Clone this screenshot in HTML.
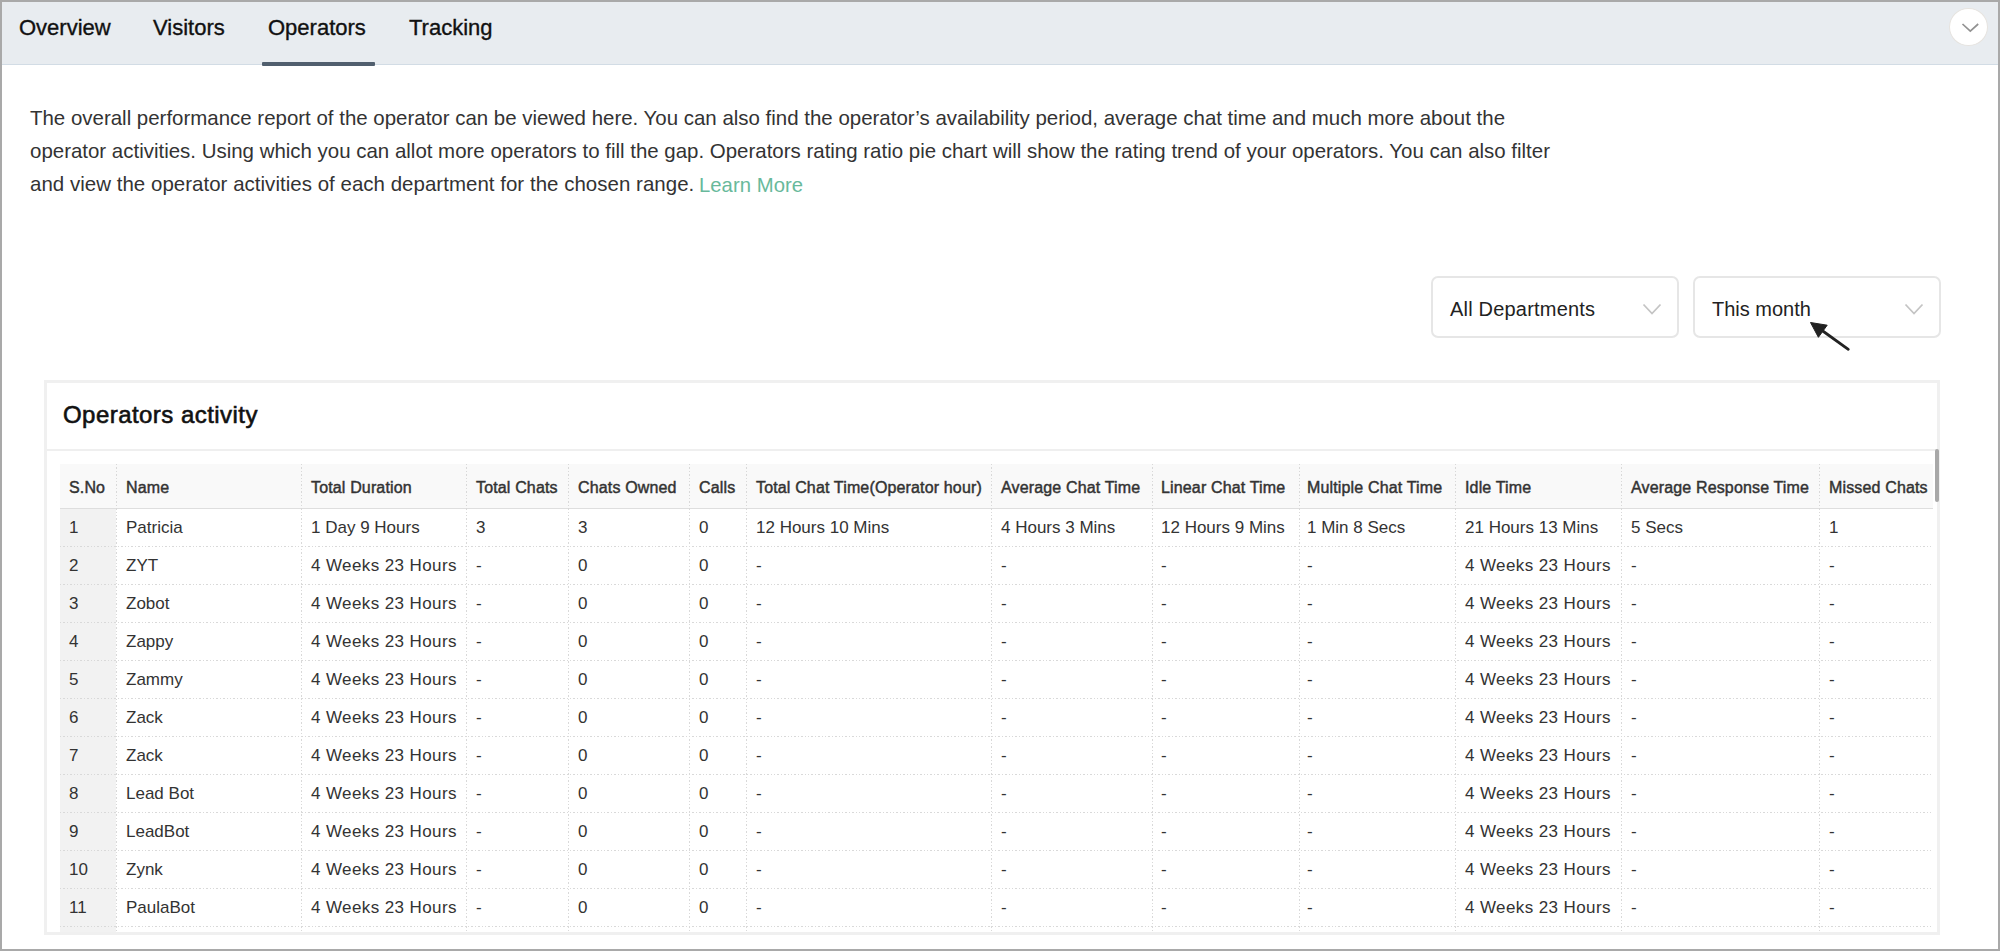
<!DOCTYPE html><html><head><meta charset="utf-8"><style>
*{margin:0;padding:0;box-sizing:border-box}
html,body{width:2000px;height:951px;overflow:hidden;background:#fff}
body{position:relative;font-family:"Liberation Sans",sans-serif;color:#333}
.a{position:absolute;white-space:nowrap}
.frame{position:absolute;left:0;top:0;width:2000px;height:951px;border:2px solid #a9a9a9;border-bottom-width:2px}
.tabbar{position:absolute;left:2px;top:2px;width:1996px;height:63px;background:#e8ecf0;border-bottom:1px solid #d2dce5}
.tab{position:absolute;top:0;font-size:22px;line-height:22px;color:#111;-webkit-text-stroke:0.35px #111}
.uline{position:absolute;left:262px;top:62px;width:113px;height:4px;background:#515f6e;border-radius:1px}
.circ{position:absolute;left:1949px;top:7.5px;width:39px;height:38.5px;border-radius:50%;background:#fff;border:1px solid #e6e3df}
.para{position:absolute;left:30px;font-size:20.47px;line-height:20px;color:#333}
.learn{color:#68b99b;font-size:20.3px;position:relative;top:1.3px;margin-left:-1px}
.dd{position:absolute;top:276px;width:248px;height:62px;border:2px solid #e6e6e6;border-radius:7px;background:#fff}
.ddt{position:absolute;font-size:20px;line-height:20px;color:#222}
.card{position:absolute;left:44px;top:380px;width:1896px;height:555px;border:3px solid #f0f0f0;background:#fff}
.ctitle{position:absolute;left:63px;font-size:24px;line-height:24px;font-weight:400;letter-spacing:0.45px;color:#111;-webkit-text-stroke:0.6px #111}
.csep{position:absolute;left:47px;top:448.5px;width:1890px;height:2px;background:#efefef}
.clip{position:absolute;left:47px;top:451px;width:1890px;height:481px;overflow:hidden}
.hbg{position:absolute;left:13px;top:13px;height:44px;background:#f9f9f9}
.hline{position:absolute;left:13px;top:56.6px;height:1.6px;background:#dedede}
.sno{position:absolute;left:13px;width:56px;background:#f2f2f2}
.vl{position:absolute;width:1px;background:repeating-linear-gradient(to bottom,#d9d9d9 0 1.4px,transparent 1.4px 3.4px)}
.hl{position:absolute;height:1px;background:repeating-linear-gradient(to right,#d9d9d9 0 1.4px,transparent 1.4px 3.4px)}
.th{position:absolute;font-size:16px;line-height:16px;font-weight:400;color:#333;-webkit-text-stroke:0.45px #333;letter-spacing:0.15px}
.td{position:absolute;font-size:17px;line-height:17px;color:#333}
.wk{letter-spacing:0.4px}
.sb{position:absolute;left:1934.6px;top:449px;width:4.8px;height:53px;background:#a8a8a8;border-radius:2px}
</style></head><body><div class="tabbar"></div>
<div class="a tab" style="left:19px;top:17.4px">Overview</div>
<div class="a tab" style="left:153px;top:17.4px">Visitors</div>
<div class="a tab" style="left:268px;top:17.4px">Operators</div>
<div class="a tab" style="left:409px;top:17.4px">Tracking</div>
<div class="uline"></div>
<div class="circ"></div>
<svg class="a" style="left:1960px;top:20px" width="22" height="14" viewBox="0 0 22 14"><path d="M2.5 4 L10.3 11.2 L18.2 4" fill="none" stroke="#929292" stroke-width="1.7"/></svg>
<div class="a para" style="top:108.3px;letter-spacing:0px">The overall performance report of the operator can be viewed here. You can also find the operator’s availability period, average chat time and much more about the</div>
<div class="a para" style="top:141.2px;letter-spacing:0px">operator activities. Using which you can allot more operators to fill the gap. Operators rating ratio pie chart will show the rating trend of your operators. You can also filter</div>
<div class="a para" style="top:173.9px;letter-spacing:0.035px">and view the operator activities of each department for the chosen range. <span class="learn">Learn More</span></div>
<div class="dd" style="left:1431px"></div>
<div class="a ddt" style="left:1450px;top:299.3px;letter-spacing:0.2px">All Departments</div>
<svg class="a" style="left:1641px;top:302px" width="22" height="15" viewBox="0 0 22 15"><path d="M2.5 2.5 L11 11.5 L19.5 2.5" fill="none" stroke="#c4c4c4" stroke-width="1.8"/></svg>
<div class="dd" style="left:1693px"></div>
<div class="a ddt" style="left:1712px;top:299.3px">This month</div>
<svg class="a" style="left:1903px;top:302px" width="22" height="15" viewBox="0 0 22 15"><path d="M2.5 2.5 L11 11.5 L19.5 2.5" fill="none" stroke="#c4c4c4" stroke-width="1.8"/></svg>
<svg class="a" style="left:1800px;top:315px" width="60" height="45" viewBox="0 0 60 45"><path d="M10.5 7.5 L27.2 10.2 L18.4 22.3 Z" fill="#222" stroke="#222" stroke-width="1" stroke-linejoin="round"/><path d="M20 14 L48.3 34.3" stroke="#222" stroke-width="2.8" stroke-linecap="round"/></svg>
<div class="card"></div>
<div class="a ctitle" style="top:403px">Operators activity</div>
<div class="csep"></div>
<div class="clip"><div class="hbg" style="width:1873px"></div><div class="sno" style="top:58px;height:423px"></div><div class="hline" style="width:1873px"></div><div class="vl" style="left:69px;top:13px;height:468px"></div><div class="vl" style="left:254px;top:13px;height:468px"></div><div class="vl" style="left:419px;top:13px;height:468px"></div><div class="vl" style="left:521px;top:13px;height:468px"></div><div class="vl" style="left:642px;top:13px;height:468px"></div><div class="vl" style="left:699px;top:13px;height:468px"></div><div class="vl" style="left:944px;top:13px;height:468px"></div><div class="vl" style="left:1105px;top:13px;height:468px"></div><div class="vl" style="left:1252px;top:13px;height:468px"></div><div class="vl" style="left:1408px;top:13px;height:468px"></div><div class="vl" style="left:1574px;top:13px;height:468px"></div><div class="vl" style="left:1772px;top:13px;height:468px"></div><div class="hl" style="left:13px;top:95px;width:1873px"></div><div class="hl" style="left:13px;top:133px;width:1873px"></div><div class="hl" style="left:13px;top:171px;width:1873px"></div><div class="hl" style="left:13px;top:209px;width:1873px"></div><div class="hl" style="left:13px;top:247px;width:1873px"></div><div class="hl" style="left:13px;top:285px;width:1873px"></div><div class="hl" style="left:13px;top:323px;width:1873px"></div><div class="hl" style="left:13px;top:361px;width:1873px"></div><div class="hl" style="left:13px;top:399px;width:1873px"></div><div class="hl" style="left:13px;top:437px;width:1873px"></div><div class="hl" style="left:13px;top:475px;width:1873px"></div><div class="a th" style="left:22px;top:28.5px">S.No</div><div class="a th" style="left:79px;top:28.5px">Name</div><div class="a th" style="left:264px;top:28.5px">Total Duration</div><div class="a th" style="left:429px;top:28.5px">Total Chats</div><div class="a th" style="left:531px;top:28.5px">Chats Owned</div><div class="a th" style="left:652px;top:28.5px">Calls</div><div class="a th" style="left:709px;top:28.5px">Total Chat Time(Operator hour)</div><div class="a th" style="left:954px;top:28.5px">Average Chat Time</div><div class="a th" style="left:1114px;top:28.5px">Linear Chat Time</div><div class="a th" style="left:1260px;top:28.5px">Multiple Chat Time</div><div class="a th" style="left:1418px;top:28.5px">Idle Time</div><div class="a th" style="left:1584px;top:28.5px">Average Response Time</div><div class="a th" style="left:1782px;top:28.5px">Missed Chats</div><div class="a td" style="left:22px;top:58px;margin-top:9.6px;transform:translateY(0px)">1</div><div class="a td" style="left:79px;top:58px;margin-top:9.6px;transform:translateY(0px)">Patricia</div><div class="a td" style="left:264px;top:58px;margin-top:9.6px;transform:translateY(0px)">1 Day 9 Hours</div><div class="a td" style="left:429px;top:58px;margin-top:9.6px;transform:translateY(0px)">3</div><div class="a td" style="left:531px;top:58px;margin-top:9.6px;transform:translateY(0px)">3</div><div class="a td" style="left:652px;top:58px;margin-top:9.6px;transform:translateY(0px)">0</div><div class="a td" style="left:709px;top:58px;margin-top:9.6px;transform:translateY(0px)">12 Hours 10 Mins</div><div class="a td" style="left:954px;top:58px;margin-top:9.6px;transform:translateY(0px)">4 Hours 3 Mins</div><div class="a td" style="left:1114px;top:58px;margin-top:9.6px;transform:translateY(0px)">12 Hours 9 Mins</div><div class="a td" style="left:1260px;top:58px;margin-top:9.6px;transform:translateY(0px)">1 Min 8 Secs</div><div class="a td" style="left:1418px;top:58px;margin-top:9.6px;transform:translateY(0px)">21 Hours 13 Mins</div><div class="a td" style="left:1584px;top:58px;margin-top:9.6px;transform:translateY(0px)">5 Secs</div><div class="a td" style="left:1782px;top:58px;margin-top:9.6px;transform:translateY(0px)">1</div><div class="a td" style="left:22px;top:58px;margin-top:9.6px;transform:translateY(38px)">2</div><div class="a td" style="left:79px;top:58px;margin-top:9.6px;transform:translateY(38px)">ZYT</div><div class="a td wk" style="left:264px;top:58px;margin-top:9.6px;transform:translateY(38px)">4 Weeks 23 Hours</div><div class="a td" style="left:429px;top:58px;margin-top:9.6px;transform:translateY(38px)">-</div><div class="a td" style="left:531px;top:58px;margin-top:9.6px;transform:translateY(38px)">0</div><div class="a td" style="left:652px;top:58px;margin-top:9.6px;transform:translateY(38px)">0</div><div class="a td" style="left:709px;top:58px;margin-top:9.6px;transform:translateY(38px)">-</div><div class="a td" style="left:954px;top:58px;margin-top:9.6px;transform:translateY(38px)">-</div><div class="a td" style="left:1114px;top:58px;margin-top:9.6px;transform:translateY(38px)">-</div><div class="a td" style="left:1260px;top:58px;margin-top:9.6px;transform:translateY(38px)">-</div><div class="a td wk" style="left:1418px;top:58px;margin-top:9.6px;transform:translateY(38px)">4 Weeks 23 Hours</div><div class="a td" style="left:1584px;top:58px;margin-top:9.6px;transform:translateY(38px)">-</div><div class="a td" style="left:1782px;top:58px;margin-top:9.6px;transform:translateY(38px)">-</div><div class="a td" style="left:22px;top:58px;margin-top:9.6px;transform:translateY(76px)">3</div><div class="a td" style="left:79px;top:58px;margin-top:9.6px;transform:translateY(76px)">Zobot</div><div class="a td wk" style="left:264px;top:58px;margin-top:9.6px;transform:translateY(76px)">4 Weeks 23 Hours</div><div class="a td" style="left:429px;top:58px;margin-top:9.6px;transform:translateY(76px)">-</div><div class="a td" style="left:531px;top:58px;margin-top:9.6px;transform:translateY(76px)">0</div><div class="a td" style="left:652px;top:58px;margin-top:9.6px;transform:translateY(76px)">0</div><div class="a td" style="left:709px;top:58px;margin-top:9.6px;transform:translateY(76px)">-</div><div class="a td" style="left:954px;top:58px;margin-top:9.6px;transform:translateY(76px)">-</div><div class="a td" style="left:1114px;top:58px;margin-top:9.6px;transform:translateY(76px)">-</div><div class="a td" style="left:1260px;top:58px;margin-top:9.6px;transform:translateY(76px)">-</div><div class="a td wk" style="left:1418px;top:58px;margin-top:9.6px;transform:translateY(76px)">4 Weeks 23 Hours</div><div class="a td" style="left:1584px;top:58px;margin-top:9.6px;transform:translateY(76px)">-</div><div class="a td" style="left:1782px;top:58px;margin-top:9.6px;transform:translateY(76px)">-</div><div class="a td" style="left:22px;top:58px;margin-top:9.6px;transform:translateY(114px)">4</div><div class="a td" style="left:79px;top:58px;margin-top:9.6px;transform:translateY(114px)">Zappy</div><div class="a td wk" style="left:264px;top:58px;margin-top:9.6px;transform:translateY(114px)">4 Weeks 23 Hours</div><div class="a td" style="left:429px;top:58px;margin-top:9.6px;transform:translateY(114px)">-</div><div class="a td" style="left:531px;top:58px;margin-top:9.6px;transform:translateY(114px)">0</div><div class="a td" style="left:652px;top:58px;margin-top:9.6px;transform:translateY(114px)">0</div><div class="a td" style="left:709px;top:58px;margin-top:9.6px;transform:translateY(114px)">-</div><div class="a td" style="left:954px;top:58px;margin-top:9.6px;transform:translateY(114px)">-</div><div class="a td" style="left:1114px;top:58px;margin-top:9.6px;transform:translateY(114px)">-</div><div class="a td" style="left:1260px;top:58px;margin-top:9.6px;transform:translateY(114px)">-</div><div class="a td wk" style="left:1418px;top:58px;margin-top:9.6px;transform:translateY(114px)">4 Weeks 23 Hours</div><div class="a td" style="left:1584px;top:58px;margin-top:9.6px;transform:translateY(114px)">-</div><div class="a td" style="left:1782px;top:58px;margin-top:9.6px;transform:translateY(114px)">-</div><div class="a td" style="left:22px;top:58px;margin-top:9.6px;transform:translateY(152px)">5</div><div class="a td" style="left:79px;top:58px;margin-top:9.6px;transform:translateY(152px)">Zammy</div><div class="a td wk" style="left:264px;top:58px;margin-top:9.6px;transform:translateY(152px)">4 Weeks 23 Hours</div><div class="a td" style="left:429px;top:58px;margin-top:9.6px;transform:translateY(152px)">-</div><div class="a td" style="left:531px;top:58px;margin-top:9.6px;transform:translateY(152px)">0</div><div class="a td" style="left:652px;top:58px;margin-top:9.6px;transform:translateY(152px)">0</div><div class="a td" style="left:709px;top:58px;margin-top:9.6px;transform:translateY(152px)">-</div><div class="a td" style="left:954px;top:58px;margin-top:9.6px;transform:translateY(152px)">-</div><div class="a td" style="left:1114px;top:58px;margin-top:9.6px;transform:translateY(152px)">-</div><div class="a td" style="left:1260px;top:58px;margin-top:9.6px;transform:translateY(152px)">-</div><div class="a td wk" style="left:1418px;top:58px;margin-top:9.6px;transform:translateY(152px)">4 Weeks 23 Hours</div><div class="a td" style="left:1584px;top:58px;margin-top:9.6px;transform:translateY(152px)">-</div><div class="a td" style="left:1782px;top:58px;margin-top:9.6px;transform:translateY(152px)">-</div><div class="a td" style="left:22px;top:58px;margin-top:9.6px;transform:translateY(190px)">6</div><div class="a td" style="left:79px;top:58px;margin-top:9.6px;transform:translateY(190px)">Zack</div><div class="a td wk" style="left:264px;top:58px;margin-top:9.6px;transform:translateY(190px)">4 Weeks 23 Hours</div><div class="a td" style="left:429px;top:58px;margin-top:9.6px;transform:translateY(190px)">-</div><div class="a td" style="left:531px;top:58px;margin-top:9.6px;transform:translateY(190px)">0</div><div class="a td" style="left:652px;top:58px;margin-top:9.6px;transform:translateY(190px)">0</div><div class="a td" style="left:709px;top:58px;margin-top:9.6px;transform:translateY(190px)">-</div><div class="a td" style="left:954px;top:58px;margin-top:9.6px;transform:translateY(190px)">-</div><div class="a td" style="left:1114px;top:58px;margin-top:9.6px;transform:translateY(190px)">-</div><div class="a td" style="left:1260px;top:58px;margin-top:9.6px;transform:translateY(190px)">-</div><div class="a td wk" style="left:1418px;top:58px;margin-top:9.6px;transform:translateY(190px)">4 Weeks 23 Hours</div><div class="a td" style="left:1584px;top:58px;margin-top:9.6px;transform:translateY(190px)">-</div><div class="a td" style="left:1782px;top:58px;margin-top:9.6px;transform:translateY(190px)">-</div><div class="a td" style="left:22px;top:58px;margin-top:9.6px;transform:translateY(228px)">7</div><div class="a td" style="left:79px;top:58px;margin-top:9.6px;transform:translateY(228px)">Zack</div><div class="a td wk" style="left:264px;top:58px;margin-top:9.6px;transform:translateY(228px)">4 Weeks 23 Hours</div><div class="a td" style="left:429px;top:58px;margin-top:9.6px;transform:translateY(228px)">-</div><div class="a td" style="left:531px;top:58px;margin-top:9.6px;transform:translateY(228px)">0</div><div class="a td" style="left:652px;top:58px;margin-top:9.6px;transform:translateY(228px)">0</div><div class="a td" style="left:709px;top:58px;margin-top:9.6px;transform:translateY(228px)">-</div><div class="a td" style="left:954px;top:58px;margin-top:9.6px;transform:translateY(228px)">-</div><div class="a td" style="left:1114px;top:58px;margin-top:9.6px;transform:translateY(228px)">-</div><div class="a td" style="left:1260px;top:58px;margin-top:9.6px;transform:translateY(228px)">-</div><div class="a td wk" style="left:1418px;top:58px;margin-top:9.6px;transform:translateY(228px)">4 Weeks 23 Hours</div><div class="a td" style="left:1584px;top:58px;margin-top:9.6px;transform:translateY(228px)">-</div><div class="a td" style="left:1782px;top:58px;margin-top:9.6px;transform:translateY(228px)">-</div><div class="a td" style="left:22px;top:58px;margin-top:9.6px;transform:translateY(266px)">8</div><div class="a td" style="left:79px;top:58px;margin-top:9.6px;transform:translateY(266px)">Lead Bot</div><div class="a td wk" style="left:264px;top:58px;margin-top:9.6px;transform:translateY(266px)">4 Weeks 23 Hours</div><div class="a td" style="left:429px;top:58px;margin-top:9.6px;transform:translateY(266px)">-</div><div class="a td" style="left:531px;top:58px;margin-top:9.6px;transform:translateY(266px)">0</div><div class="a td" style="left:652px;top:58px;margin-top:9.6px;transform:translateY(266px)">0</div><div class="a td" style="left:709px;top:58px;margin-top:9.6px;transform:translateY(266px)">-</div><div class="a td" style="left:954px;top:58px;margin-top:9.6px;transform:translateY(266px)">-</div><div class="a td" style="left:1114px;top:58px;margin-top:9.6px;transform:translateY(266px)">-</div><div class="a td" style="left:1260px;top:58px;margin-top:9.6px;transform:translateY(266px)">-</div><div class="a td wk" style="left:1418px;top:58px;margin-top:9.6px;transform:translateY(266px)">4 Weeks 23 Hours</div><div class="a td" style="left:1584px;top:58px;margin-top:9.6px;transform:translateY(266px)">-</div><div class="a td" style="left:1782px;top:58px;margin-top:9.6px;transform:translateY(266px)">-</div><div class="a td" style="left:22px;top:58px;margin-top:9.6px;transform:translateY(304px)">9</div><div class="a td" style="left:79px;top:58px;margin-top:9.6px;transform:translateY(304px)">LeadBot</div><div class="a td wk" style="left:264px;top:58px;margin-top:9.6px;transform:translateY(304px)">4 Weeks 23 Hours</div><div class="a td" style="left:429px;top:58px;margin-top:9.6px;transform:translateY(304px)">-</div><div class="a td" style="left:531px;top:58px;margin-top:9.6px;transform:translateY(304px)">0</div><div class="a td" style="left:652px;top:58px;margin-top:9.6px;transform:translateY(304px)">0</div><div class="a td" style="left:709px;top:58px;margin-top:9.6px;transform:translateY(304px)">-</div><div class="a td" style="left:954px;top:58px;margin-top:9.6px;transform:translateY(304px)">-</div><div class="a td" style="left:1114px;top:58px;margin-top:9.6px;transform:translateY(304px)">-</div><div class="a td" style="left:1260px;top:58px;margin-top:9.6px;transform:translateY(304px)">-</div><div class="a td wk" style="left:1418px;top:58px;margin-top:9.6px;transform:translateY(304px)">4 Weeks 23 Hours</div><div class="a td" style="left:1584px;top:58px;margin-top:9.6px;transform:translateY(304px)">-</div><div class="a td" style="left:1782px;top:58px;margin-top:9.6px;transform:translateY(304px)">-</div><div class="a td" style="left:22px;top:58px;margin-top:9.6px;transform:translateY(342px)">10</div><div class="a td" style="left:79px;top:58px;margin-top:9.6px;transform:translateY(342px)">Zynk</div><div class="a td wk" style="left:264px;top:58px;margin-top:9.6px;transform:translateY(342px)">4 Weeks 23 Hours</div><div class="a td" style="left:429px;top:58px;margin-top:9.6px;transform:translateY(342px)">-</div><div class="a td" style="left:531px;top:58px;margin-top:9.6px;transform:translateY(342px)">0</div><div class="a td" style="left:652px;top:58px;margin-top:9.6px;transform:translateY(342px)">0</div><div class="a td" style="left:709px;top:58px;margin-top:9.6px;transform:translateY(342px)">-</div><div class="a td" style="left:954px;top:58px;margin-top:9.6px;transform:translateY(342px)">-</div><div class="a td" style="left:1114px;top:58px;margin-top:9.6px;transform:translateY(342px)">-</div><div class="a td" style="left:1260px;top:58px;margin-top:9.6px;transform:translateY(342px)">-</div><div class="a td wk" style="left:1418px;top:58px;margin-top:9.6px;transform:translateY(342px)">4 Weeks 23 Hours</div><div class="a td" style="left:1584px;top:58px;margin-top:9.6px;transform:translateY(342px)">-</div><div class="a td" style="left:1782px;top:58px;margin-top:9.6px;transform:translateY(342px)">-</div><div class="a td" style="left:22px;top:58px;margin-top:9.6px;transform:translateY(380px)">11</div><div class="a td" style="left:79px;top:58px;margin-top:9.6px;transform:translateY(380px)">PaulaBot</div><div class="a td wk" style="left:264px;top:58px;margin-top:9.6px;transform:translateY(380px)">4 Weeks 23 Hours</div><div class="a td" style="left:429px;top:58px;margin-top:9.6px;transform:translateY(380px)">-</div><div class="a td" style="left:531px;top:58px;margin-top:9.6px;transform:translateY(380px)">0</div><div class="a td" style="left:652px;top:58px;margin-top:9.6px;transform:translateY(380px)">0</div><div class="a td" style="left:709px;top:58px;margin-top:9.6px;transform:translateY(380px)">-</div><div class="a td" style="left:954px;top:58px;margin-top:9.6px;transform:translateY(380px)">-</div><div class="a td" style="left:1114px;top:58px;margin-top:9.6px;transform:translateY(380px)">-</div><div class="a td" style="left:1260px;top:58px;margin-top:9.6px;transform:translateY(380px)">-</div><div class="a td wk" style="left:1418px;top:58px;margin-top:9.6px;transform:translateY(380px)">4 Weeks 23 Hours</div><div class="a td" style="left:1584px;top:58px;margin-top:9.6px;transform:translateY(380px)">-</div><div class="a td" style="left:1782px;top:58px;margin-top:9.6px;transform:translateY(380px)">-</div><div class="a td" style="left:22px;top:58px;margin-top:9.6px;transform:translateY(418px)">12</div><div class="a td wk" style="left:264px;top:58px;margin-top:9.6px;transform:translateY(418px)">4 Weeks 23 Hours</div><div class="a td" style="left:429px;top:58px;margin-top:9.6px;transform:translateY(418px)">-</div><div class="a td" style="left:531px;top:58px;margin-top:9.6px;transform:translateY(418px)">0</div><div class="a td" style="left:652px;top:58px;margin-top:9.6px;transform:translateY(418px)">0</div><div class="a td" style="left:709px;top:58px;margin-top:9.6px;transform:translateY(418px)">-</div><div class="a td" style="left:954px;top:58px;margin-top:9.6px;transform:translateY(418px)">-</div><div class="a td" style="left:1114px;top:58px;margin-top:9.6px;transform:translateY(418px)">-</div><div class="a td" style="left:1260px;top:58px;margin-top:9.6px;transform:translateY(418px)">-</div><div class="a td wk" style="left:1418px;top:58px;margin-top:9.6px;transform:translateY(418px)">4 Weeks 23 Hours</div><div class="a td" style="left:1584px;top:58px;margin-top:9.6px;transform:translateY(418px)">-</div><div class="a td" style="left:1782px;top:58px;margin-top:9.6px;transform:translateY(418px)">-</div></div>
<div class="sb"></div>
<div class="frame"></div></body></html>
